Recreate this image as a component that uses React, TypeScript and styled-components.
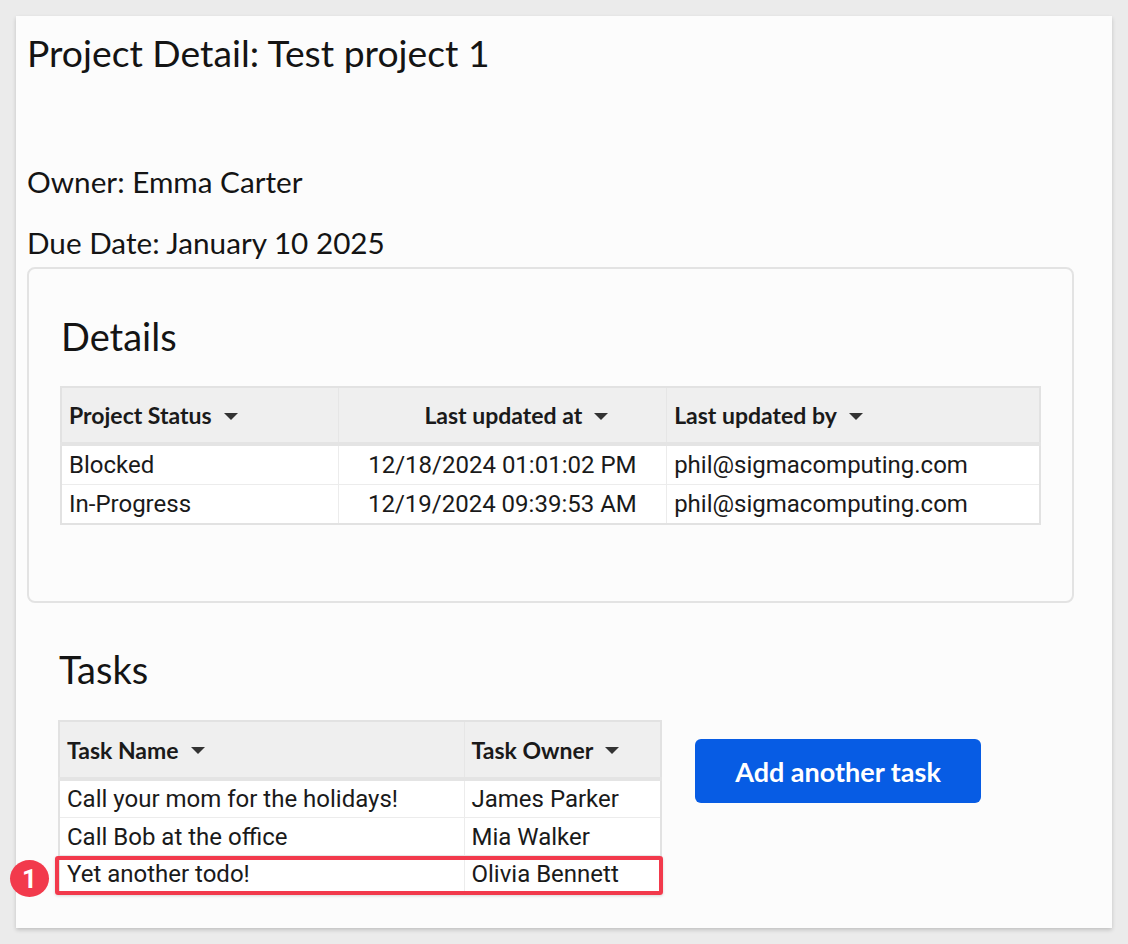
import React from "react";
import styled, { createGlobalStyle } from "styled-components";

const GlobalStyle = createGlobalStyle`
  html, body { margin: 0; padding: 0; background: #ebebeb; }
  * { box-sizing: border-box; }
`;

const Page = styled.div`
  padding: 16px;
`;

const Card = styled.main`
  width: 1096px;
  height: 912px;
  background: #fcfcfc;
  box-shadow: 0 2px 4px rgba(0, 0, 0, 0.18);
  padding: 14px 11px 0;
  color: #141414;
  font-family: Lato, "Open Sans", sans-serif;
`;

const Title = styled.h1`
  margin: 0;
  font-weight: 400;
  font-size: 37.3px;
  line-height: 46px;
`;

const Meta = styled.div`
  margin-top: 88px;
  display: flex;
  flex-direction: column;
  gap: 25px;
`;

const MetaLine = styled.p`
  margin: 0;
  font-size: 29.7px;
  line-height: 36px;
`;

const Panel = styled.section<{ $bordered?: boolean }>`
  width: 1047px;
  border: ${(p) => (p.$bordered ? "2px solid #e3e3e3" : "none")};
  border-radius: 8px;
  padding: ${(p) => (p.$bordered ? "44px 31px 0" : "0 31px")};
`;

const DetailsPanel = styled(Panel)`
  margin-top: 6px;
  height: 336px;
`;

const TasksPanel = styled(Panel)`
  margin-top: 43px;
`;

const PanelTitle = styled.h2`
  margin: 0;
  padding-left: 1px;
  font-weight: 400;
  font-size: 38px;
  line-height: 46px;
`;

const Table = styled.table<{ $gap: number }>`
  margin-top: ${(p) => p.$gap}px;
  border-collapse: collapse;
  border: 2px solid #e2e2e2;
  table-layout: fixed;
  background: #ffffff;
`;

const HeadCell = styled.th<{ $w: number; $center?: boolean; $h: number }>`
  width: ${(p) => p.$w}px;
  height: ${(p) => p.$h}px;
  padding: ${(p) => (p.$center ? "0 7px 0 35px" : "0 7px")};
  background: #efefef;
  border-right: 1px solid #e6e6e6;
  border-bottom: 4px solid #e4e4e4;
  text-align: ${(p) => (p.$center ? "center" : "left")};
  font-family: Lato, sans-serif;
  font-weight: 700;
  font-size: 23px;
  color: #1a1a1a;
  white-space: nowrap;
`;

const Caret = styled.span`
  display: inline-block;
  width: 0;
  height: 0;
  margin-left: 12px;
  vertical-align: middle;
  border-left: 7px solid transparent;
  border-right: 7px solid transparent;
  border-top: 7px solid #333;
  position: relative;
  top: -2px;
`;

const Cell = styled.td<{ $center?: boolean; $h: number }>`
  height: ${(p) => p.$h}px;
  padding: 1px 7px 0;
  border-right: 1px solid #ececec;
  border-bottom: 1px solid #ececec;
  text-align: ${(p) => (p.$center ? "center" : "left")};
  font-family: Roboto, sans-serif;
  font-size: 24px;
  color: #1a1a1a;
  white-space: nowrap;
`;

const TasksRow = styled.div`
  display: flex;
  align-items: flex-start;
  gap: 33px;
  margin-top: 28px;
`;

const TableWrap = styled.div`
  position: relative;
`;

const Highlight = styled.div`
  position: absolute;
  left: -3px;
  right: -1px;
  bottom: -1px;
  height: 39px;
  border: 4px solid #f23a4c;
  border-radius: 3px;
  box-shadow: 0 1px 3px rgba(0, 0, 0, 0.15);
  pointer-events: none;
`;

const Badge = styled.div`
  position: absolute;
  left: -48px;
  bottom: -3px;
  width: 39px;
  height: 37px;
  border-radius: 50%;
  background: #f23a4c;
  color: #fff;
  display: flex;
  align-items: center;
  justify-content: center;
  font-family: Roboto, sans-serif;
  font-weight: 700;
  font-size: 26px;
`;

const AddButton = styled.button`
  margin-top: 19px;
  width: 286px;
  height: 64px;
  border: none;
  border-radius: 6px;
  background: #075ce4;
  color: #fff;
  font-family: Lato, sans-serif;
  font-weight: 700;
  font-size: 27px;
  cursor: pointer;
`;

const details = [
  ["Blocked", "12/18/2024 01:01:02 PM", "phil@sigmacomputing.com"],
  ["In-Progress", "12/19/2024 09:39:53 AM", "phil@sigmacomputing.com"],
];

const tasks = [
  ["Call your mom for the holidays!", "James Parker"],
  ["Call Bob at the office", "Mia Walker"],
  ["Yet another todo!", "Olivia Bennett"],
];

export default function App() {
  return (
    <>
      <GlobalStyle />
      <Page>
        <Card>
          <Title>Project Detail: Test project 1</Title>
          <Meta>
            <MetaLine>Owner: Emma Carter</MetaLine>
            <MetaLine>Due Date: January 10 2025</MetaLine>
          </Meta>
          <DetailsPanel $bordered>
            <PanelTitle>Details</PanelTitle>
            <Table $gap={27}>
              <thead>
                <tr>
                  <HeadCell $w={278} $h={57}>
                    Project Status<Caret />
                  </HeadCell>
                  <HeadCell $w={329} $h={57} $center>
                    Last updated at<Caret />
                  </HeadCell>
                  <HeadCell $w={374} $h={57}>
                    Last updated by<Caret />
                  </HeadCell>
                </tr>
              </thead>
              <tbody>
                {details.map((r) => (
                  <tr key={r[1]}>
                    <Cell $h={40}>{r[0]}</Cell>
                    <Cell $h={40} $center>
                      {r[1]}
                    </Cell>
                    <Cell $h={40}>{r[2]}</Cell>
                  </tr>
                ))}
              </tbody>
            </Table>
          </DetailsPanel>
          <TasksPanel>
            <PanelTitle>Tasks</PanelTitle>
            <TasksRow>
              <TableWrap>
                <Table $gap={0}>
                  <thead>
                    <tr>
                      <HeadCell $w={405} $h={58}>
                        Task Name<Caret />
                      </HeadCell>
                      <HeadCell $w={197} $h={58}>
                        Task Owner<Caret />
                      </HeadCell>
                    </tr>
                  </thead>
                  <tbody>
                    {tasks.map((r) => (
                      <tr key={r[0]}>
                        <Cell $h={38}>{r[0]}</Cell>
                        <Cell $h={38}>{r[1]}</Cell>
                      </tr>
                    ))}
                  </tbody>
                </Table>
                <Highlight />
                <Badge>1</Badge>
              </TableWrap>
              <AddButton>Add another task</AddButton>
            </TasksRow>
          </TasksPanel>
        </Card>
      </Page>
    </>
  );
}
